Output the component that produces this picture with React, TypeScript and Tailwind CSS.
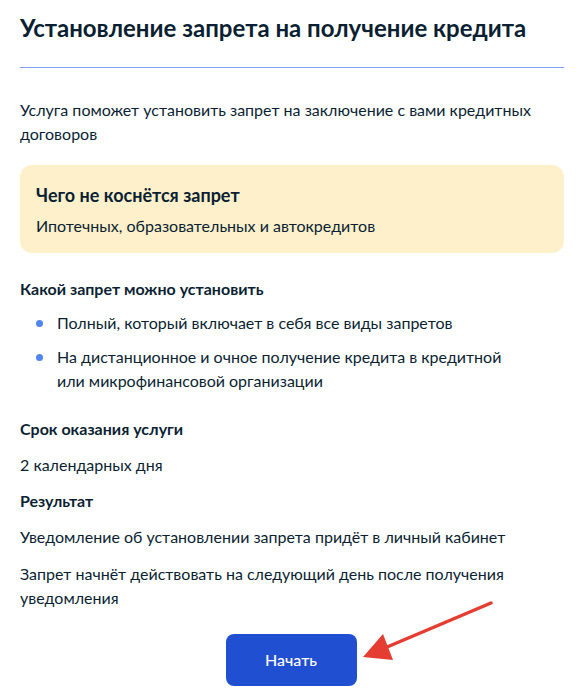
import React from 'react';

const Bullet: React.FC<{ children: React.ReactNode }> = ({ children }) => (
  <li className="flex items-start gap-[14px]">
    <span className="mt-[9px] h-[7px] w-[7px] shrink-0 rounded-full bg-[#4f86f2]" />
    <span>{children}</span>
  </li>
);

const App: React.FC = () => {
  return (
    <div
      className="relative min-h-[696px] bg-white pl-5 pr-[18px] pt-3 text-[16px] leading-6 text-[#0b1f33]"
      style={{ fontFamily: 'Lato, "Noto Sans", sans-serif' }}
    >
      <h1 className="text-[24px] font-bold leading-8">Установление запрета на получение кредита</h1>

      <div className="mt-[23px] border-t border-solid border-[#7fa3f2]" />

      <p className="mt-[30px]">Услуга поможет установить запрет на заключение с вами кредитных договоров</p>

      <div className="mt-[19px] rounded-xl bg-[#fdf0cb] px-4 pb-[15px] pt-[18px]">
        <h2 className="text-[18px] font-bold leading-6">Чего не коснётся запрет</h2>
        <p className="mt-[7px]">Ипотечных, образовательных и автокредитов</p>
      </div>

      <h3 className="mt-6 font-bold">Какой запрет можно установить</h3>
      <ul className="mt-[10px] flex flex-col gap-[10px] pl-4">
        <Bullet>Полный, который включает в себя все виды запретов</Bullet>
        <Bullet>
          На дистанционное и очное получение кредита в кредитной
          <br />
          или микрофинансовой организации
        </Bullet>
      </ul>

      <h3 className="mt-6 font-bold">Срок оказания услуги</h3>
      <p className="mt-3">2 календарных дня</p>
      <h3 className="mt-3 font-bold">Результат</h3>
      <p className="mt-3">Уведомление об установлении запрета придёт в личный кабинет</p>
      <p className="mt-[13px]">Запрет начнёт действовать на следующий день после получения уведомления</p>

      <div className="mt-[24px] flex justify-center pr-[2px]">
        <button className="h-[52px] w-[131px] rounded-lg bg-[#214fd1] text-[16px] font-medium text-white">
          Начать
        </button>
      </div>

      <svg className="pointer-events-none absolute left-0 top-0" width="582" height="696" viewBox="0 0 582 696">
        <line x1="491" y1="603" x2="380" y2="650" stroke="#e53d31" strokeWidth="3.5" strokeLinecap="round" />
        <polygon points="363,657 383,634 393,660" fill="#e53d31" />
      </svg>
    </div>
  );
};

export default App;
